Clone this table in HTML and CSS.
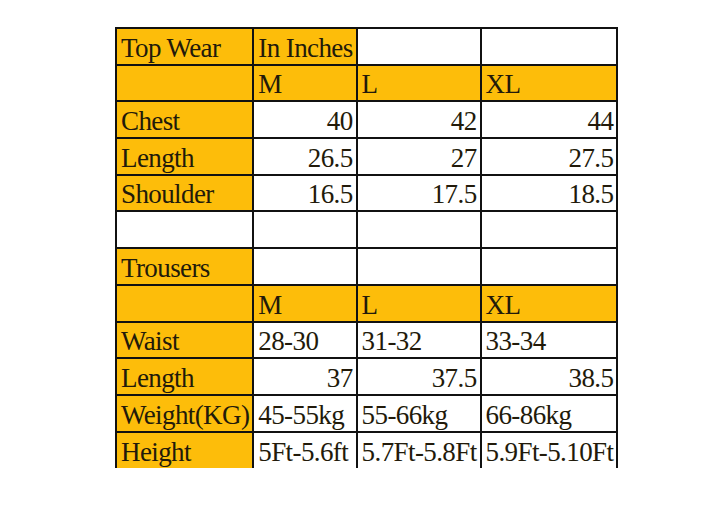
FILE: index.html
```html
<!DOCTYPE html>
<html>
<head>
<meta charset="utf-8">
<link rel="stylesheet" href="styles.css">
</head>
<body>
<table class="size-chart">
  <colgroup>
    <col class="c1"><col class="c2"><col class="c3"><col class="c4">
  </colgroup>
  <tr><td class="y">Top Wear</td><td class="y">In Inches</td><td></td><td></td></tr>
  <tr class="yrow"><td></td><td>M</td><td>L</td><td>XL</td></tr>
  <tr><td class="y">Chest</td><td class="r">40</td><td class="r">42</td><td class="r">44</td></tr>
  <tr><td class="y">Length</td><td class="r">26.5</td><td class="r">27</td><td class="r">27.5</td></tr>
  <tr><td class="y">Shoulder</td><td class="r">16.5</td><td class="r">17.5</td><td class="r">18.5</td></tr>
  <tr><td></td><td></td><td></td><td></td></tr>
  <tr><td class="y">Trousers</td><td></td><td></td><td></td></tr>
  <tr class="yrow"><td></td><td>M</td><td>L</td><td>XL</td></tr>
  <tr><td class="y">Waist</td><td>28-30</td><td>31-32</td><td>33-34</td></tr>
  <tr><td class="y">Length</td><td class="r">37</td><td class="r">37.5</td><td class="r">38.5</td></tr>
  <tr><td class="y">Weight(KG)</td><td>45-55kg</td><td>55-66kg</td><td>66-86kg</td></tr>
  <tr class="last"><td class="y">Height</td><td>5Ft-5.6ft</td><td>5.7Ft-5.8Ft</td><td>5.9Ft-5.10Ft</td></tr>
</table>
</body>
</html>
```
FILE: styles.css
```css
html, body {
  margin: 0;
  padding: 0;
  background: #ffffff;
}
body {
  padding: 27px 0 0 115px;
}
.size-chart {
  border-collapse: collapse;
  table-layout: fixed;
  font-family: "Liberation Serif", "Times New Roman", serif;
  font-size: 27px;
  letter-spacing: -0.6px;
  color: #221a0a;
}
.c1 { width: 134px; }
.c2 { width: 101px; }
.c3 { width: 121px; }
.c4 { width: 136px; }
.size-chart td {
  border: 2px solid #111;
  height: 36.7px;
  box-sizing: border-box;
  padding: 0 3px 1px 4px;
  line-height: 30px;
  vertical-align: bottom;
  white-space: nowrap;
  overflow: hidden;
  background: #ffffff;
}
.size-chart td.y,
.size-chart tr.yrow td {
  background: #fdbd0a;
}
.size-chart td.r {
  text-align: right;
}
.size-chart tr.last td {
  border-bottom: none;
}
```
